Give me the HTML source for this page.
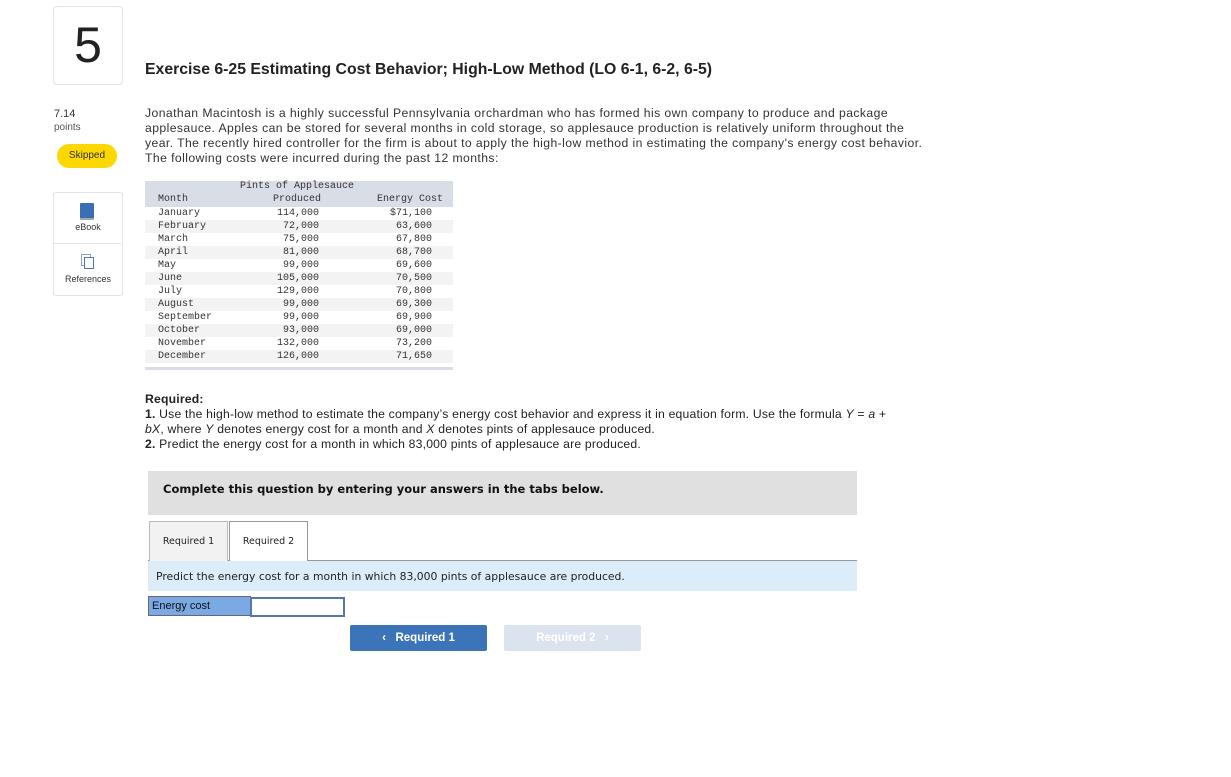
<!DOCTYPE html>
<html><head><meta charset="utf-8"><style>
body{margin:0;width:1231px;height:777px;background:#fff;font-family:"Liberation Sans",sans-serif;color:#222;position:relative;overflow:hidden}
.a{position:absolute}
.num{left:53px;top:6px;width:68px;height:77px;border:1px solid #e3e3e3;border-radius:4px;font-size:50px;text-align:center;line-height:77px;color:#222}
h1{position:absolute;left:145px;top:61px;margin:0;font-size:15.8px;font-weight:bold;color:#222}
.txt{left:145px;top:106px;width:820px;font-size:12.2px;letter-spacing:0.42px;line-height:15px;color:#333;white-space:nowrap}
.tbl{left:145px;top:181px;width:308px;font-family:"Liberation Mono",monospace;font-size:10px;color:#333}
.tbl .r{height:13px;line-height:13px;position:relative}
.tbl span{position:absolute}
.m{left:13px}.p{right:134px}.e{right:21px}
</style></head><body>
<div class="a num">5</div>
<div class="a" style="left:54px;top:108px;font-size:11px;color:#333">7.14</div>
<div class="a" style="left:54px;top:122px;font-size:10px;color:#555">points</div>
<div class="a" style="left:57px;top:144px;width:60px;height:24px;border-radius:12px;background:#fcd700;font-size:10px;line-height:24px;text-align:center;color:#333">Skipped</div>
<div class="a" style="left:53px;top:192px;width:68px;height:102px;border:1px solid #e3e3e3;border-radius:3px"></div>
<div class="a" style="left:54px;top:243px;width:67px;border-top:1px solid #e3e3e3"></div>
<div class="a" style="left:80px;top:203px;width:14px;height:15px;background:#3a6fb8;border-radius:1px;border-bottom:2px solid #9aa"></div>
<div class="a" style="left:54px;top:222px;width:68px;text-align:center;font-size:9px;color:#333">eBook</div>
<div class="a" style="left:81px;top:254px;width:8px;height:10px;border:1px solid #8aa0c8;background:#fff"></div>
<div class="a" style="left:84px;top:257px;width:8px;height:10px;border:1px solid #5578b8;background:#fff"></div>
<div class="a" style="left:54px;top:274px;width:68px;text-align:center;font-size:9px;color:#333">References</div>
<h1>Exercise 6-25 Estimating Cost Behavior; High-Low Method (LO 6-1, 6-2, 6-5)</h1>
<div class="a txt">Jonathan Macintosh is a highly successful Pennsylvania orchardman who has formed his own company to produce and package<br>applesauce. Apples can be stored for several months in cold storage, so applesauce production is relatively uniform throughout the<br>year. The recently hired controller for the firm is about to apply the high-low method in estimating the company's energy cost behavior.<br>The following costs were incurred during the past 12 months:</div>
<div class="a tbl">
<div style="background:#d9dde6;height:26px;position:relative"><span style="left:95px;top:0">Pints of Applesauce</span><span class="m" style="top:13px">Month</span><span style="right:132px;top:13px">Produced</span><span style="right:10px;top:13px">Energy Cost</span></div>
<div class="r"><span class="m">January</span><span class="p">114,000</span><span class="e">$71,100</span></div>
<div class="r" style="background:#f3f3f3"><span class="m">February</span><span class="p">72,000</span><span class="e">63,600</span></div>
<div class="r"><span class="m">March</span><span class="p">75,000</span><span class="e">67,800</span></div>
<div class="r" style="background:#f3f3f3"><span class="m">April</span><span class="p">81,000</span><span class="e">68,700</span></div>
<div class="r"><span class="m">May</span><span class="p">99,000</span><span class="e">69,600</span></div>
<div class="r" style="background:#f3f3f3"><span class="m">June</span><span class="p">105,000</span><span class="e">70,500</span></div>
<div class="r"><span class="m">July</span><span class="p">129,000</span><span class="e">70,800</span></div>
<div class="r" style="background:#f3f3f3"><span class="m">August</span><span class="p">99,000</span><span class="e">69,300</span></div>
<div class="r"><span class="m">September</span><span class="p">99,000</span><span class="e">69,900</span></div>
<div class="r" style="background:#f3f3f3"><span class="m">October</span><span class="p">93,000</span><span class="e">69,000</span></div>
<div class="r"><span class="m">November</span><span class="p">132,000</span><span class="e">73,200</span></div>
<div class="r" style="background:#f3f3f3"><span class="m">December</span><span class="p">126,000</span><span class="e">71,650</span></div>
<div style="height:4px"></div><div style="height:3px;background:#d9dde6"></div>
</div>
<div class="a" style="left:145px;top:392px;width:800px;font-size:12.2px;letter-spacing:0.2px;line-height:15px;color:#222;white-space:nowrap"><b>Required:</b><br><b>1.</b> Use the high-low method to estimate the company’s energy cost behavior and express it in equation form. Use the formula <i>Y</i> = <i>a</i> +<br><i>bX</i>, where <i>Y</i> denotes energy cost for a month and <i>X</i> denotes pints of applesauce produced.<br><b>2.</b> Predict the energy cost for a month in which 83,000 pints of applesauce are produced.</div>
<div class="a" style="left:148px;top:471px;width:709px;height:44px;background:#e0e0e0;font-family:'DejaVu Sans',sans-serif;font-size:11.5px;font-weight:bold;line-height:36px;color:#111;text-indent:15px">Complete this question by entering your answers in the tabs below.</div>
<div class="a" style="left:148px;top:560px;width:709px;border-top:1px solid #999"></div>
<div class="a" style="left:149px;top:521px;width:77px;height:39px;background:#f2f2f2;border:1px solid #bbb;border-bottom:none;font-family:'DejaVu Sans',sans-serif;font-size:9.5px;line-height:40px;text-align:center;color:#222">Required 1</div>
<div class="a" style="left:229px;top:521px;width:77px;height:40px;background:#fff;border:1px solid #999;border-bottom:none;font-family:'DejaVu Sans',sans-serif;font-size:9.5px;line-height:40px;text-align:center;color:#222">Required 2</div>
<div class="a" style="left:148px;top:561px;width:709px;height:30px;background:#dcecf9;font-family:'DejaVu Sans',sans-serif;font-size:10.8px;line-height:32px;color:#222;text-indent:8px">Predict the energy cost for a month in which 83,000 pints of applesauce are produced.</div>
<div class="a" style="left:148px;top:596px;width:101px;height:18px;background:#7aa9e4;border:1px solid #667;font-size:11px;line-height:18px;text-indent:3px;color:#111">Energy cost</div>
<div class="a" style="left:250px;top:597px;width:91px;height:16px;background:#fff;border:2px solid #5577aa"></div>
<div class="a" style="left:350px;top:625px;width:137px;height:26px;background:#3b74b8;border-radius:2px;color:#fff;font-size:11.5px;font-weight:bold;line-height:26px;text-align:center">‹&nbsp;&nbsp;&nbsp;Required 1</div>
<div class="a" style="left:504px;top:625px;width:137px;height:26px;background:#dbe3ee;border-radius:2px;color:#fff;font-size:11.5px;font-weight:bold;line-height:26px;text-align:center">Required 2&nbsp;&nbsp;&nbsp;›</div>
</body></html>
